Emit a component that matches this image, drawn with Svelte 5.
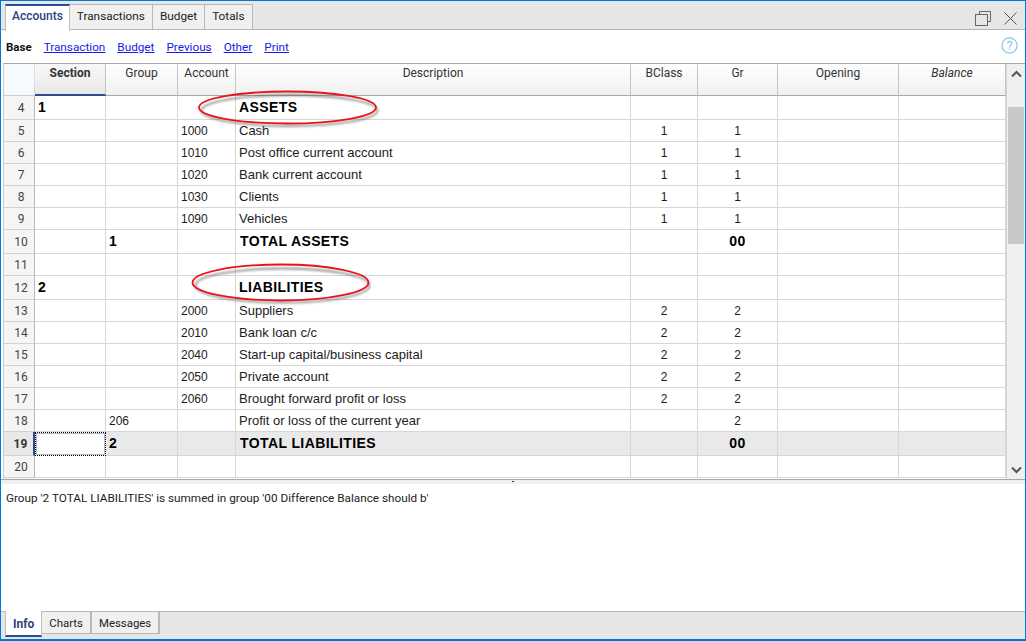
<script>
  const links = ['Transaction', 'Budget', 'Previous', 'Other', 'Print']
  const columns = [
    { label: '', cls: 'corner' },
    { label: 'Section', cls: 'active' },
    { label: 'Group' },
    { label: 'Account' },
    { label: 'Description' },
    { label: 'BClass' },
    { label: 'Gr' },
    { label: 'Opening' },
    { label: 'Balance', cls: 'italic' }
  ]

  // n, section, group, account, description, bclass, gr
  const rows = [
    { n: 4, section: '1', desc: 'ASSETS', kind: 'big head' },
    { n: 5, account: '1000', desc: 'Cash', bclass: '1', gr: '1' },
    { n: 6, account: '1010', desc: 'Post office current account', bclass: '1', gr: '1' },
    { n: 7, account: '1020', desc: 'Bank current account', bclass: '1', gr: '1' },
    { n: 8, account: '1030', desc: 'Clients', bclass: '1', gr: '1' },
    { n: 9, account: '1090', desc: 'Vehicles', bclass: '1', gr: '1' },
    { n: 10, group: '1', desc: 'TOTAL ASSETS', gr: '00', kind: 'big total' },
    { n: 11 },
    { n: 12, section: '2', desc: 'LIABILITIES', kind: 'big head' },
    { n: 13, account: '2000', desc: 'Suppliers', bclass: '2', gr: '2' },
    { n: 14, account: '2010', desc: 'Bank loan c/c', bclass: '2', gr: '2' },
    { n: 15, account: '2040', desc: 'Start-up capital/business capital', bclass: '2', gr: '2' },
    { n: 16, account: '2050', desc: 'Private account', bclass: '2', gr: '2' },
    { n: 17, account: '2060', desc: 'Brought forward profit or loss', bclass: '2', gr: '2' },
    { n: 18, group: '206', desc: 'Profit or loss of the current year', gr: '2' },
    { n: 19, group: '2', desc: 'TOTAL LIABILITIES', gr: '00', kind: 'big total current' },
    { n: 20 }
  ]
</script>

<div class="window">
  <div class="tabbar">
    <div class="tabs">
      <div class="tab on">Accounts</div>
      <div class="tab">Transactions</div>
      <div class="tab">Budget</div>
      <div class="tab">Totals</div>
    </div>
    <div class="winbtns">
      <svg width="16" height="15" viewBox="0 0 16 15" fill="none" stroke="#666">
        <path d="M4.500 3.500V0.500H15.500V10.500H12.500" />
        <rect x="0.500" y="3.500" width="12" height="11" />
      </svg>
      <svg width="13" height="13" viewBox="0 0 13 13" fill="none" stroke="#555">
        <path d="M0.500 0.500L12.500 12.500M12.500 0.500L0.500 12.500" />
      </svg>
    </div>
  </div>

  <div class="linkbar">
    <b>Base</b>
    {#each links as link}
      <a href="#top">{link}</a>
    {/each}
    <svg class="help" width="17" height="17" viewBox="0 0 17 17">
      <circle cx="8.500" cy="8.500" r="7.600" fill="none" stroke="#8cc4ea" stroke-width="1.200" />
      <text x="8.500" y="13" text-anchor="middle">?</text>
    </svg>
  </div>

  <div class="gridwrap">
    <div class="grid">
      <div class="hrow">
        {#each columns as c}
          <div class="hcell {c.cls ?? ''}">{c.label}</div>
        {/each}
      </div>
      {#each rows as r}
        <div class="row {r.kind ?? ''}">
          <div class="num">{r.n}</div>
          <div class="cell sec">{r.section ?? ''}</div>
          <div class="cell grp">{r.group ?? ''}</div>
          <div class="cell">{r.account ?? ''}</div>
          <div class="cell dsc">{r.desc ?? ''}</div>
          <div class="cell mid">{r.bclass ?? ''}</div>
          <div class="cell mid">{r.gr ?? ''}</div>
          <div class="cell"></div>
          <div class="cell"></div>
        </div>
      {/each}
      <div class="stub"></div>

      <svg class="marks" width="1002" height="400" viewBox="0 0 1002 400" fill="none">
        <defs>
          <filter id="soft" x="-10%" y="-30%" width="120%" height="160%">
            <feGaussianBlur stdDeviation="1.200" />
          </filter>
        </defs>
        <ellipse cx="285.500" cy="46.500" rx="88" ry="15.500" stroke="#444" stroke-opacity="0.6" stroke-width="1.800" filter="url(#soft)" />
        <ellipse cx="283.500" cy="43.500" rx="88.500" ry="16" stroke="#e8141c" stroke-width="1.800" />
        <ellipse cx="278.500" cy="221.500" rx="87" ry="17" stroke="#444" stroke-opacity="0.6" stroke-width="1.800" filter="url(#soft)" />
        <ellipse cx="276.500" cy="218.500" rx="88" ry="18" stroke="#e8141c" stroke-width="1.800" />
      </svg>
    </div>
    <div class="scroll">
      <svg width="11" height="8" viewBox="0 0 11 8" fill="none" stroke="#555" stroke-width="2"><path d="M1 6.500L5.500 2L10 6.500" /></svg>
      <div class="thumb"></div>
      <svg class="down" width="11" height="8" viewBox="0 0 11 8" fill="none" stroke="#555" stroke-width="2"><path d="M1 1.500L5.500 6L10 1.500" /></svg>
    </div>
  </div>

  <div class="splitter"><span></span></div>

  <div class="info">Group '2 TOTAL LIABILITIES' is summed in group '00 Difference Balance should b'</div>

  <div class="bottomtabs">
    <div class="btab on">Info</div>
    <div class="btab">Charts</div>
    <div class="btab">Messages</div>
  </div>
</div>

<style>
  :global(body) {
    margin: 0;
    background: #fff;
  }

  .window {
    width: 1026px;
    height: 641px;
    box-sizing: border-box;
    border: 1px solid #0078d7;
    border-bottom-width: 2px;
    display: flex;
    flex-direction: column;
    font-family: 'Liberation Sans', Arial, sans-serif;
    font-size: 12px;
    color: #222;
    overflow: hidden;
    background: #fff;
  }

  .tabbar {
    height: 29px;
    flex: none;
    box-sizing: border-box;
    background: #e6e6e6;
    border-bottom: 1px solid #b4b4b4;
    display: flex;
    justify-content: space-between;
    padding-left: 4px;
    font-family: Roboto, sans-serif;
  }

  .tabs {
    display: flex;
    align-items: flex-end;
    margin-top: 3px;
    height: 26px;
  }

  .tab {
    height: 26px;
    box-sizing: border-box;
    background: #f0f0f0;
    border: 1px solid #b8b8b8;
    border-left: 0;
    padding: 4px 7px 0 7px;
    font-size: 11.800px;
    color: #222;
  }

  .tab.on {
    height: 27px;
    margin-bottom: -1px;
    background: #fff;
    border: 0;
    border-top: 2px solid #2f4b8f;
    border-left: 1px solid #c0c0c0;
    border-right: 1px solid #c0c0c0;
    color: #2f3f7f;
    font-size: 12px;
    font-weight: 500;
    padding: 3px 6px 0 6px;
  }

  .winbtns {
    display: flex;
    align-items: center;
    gap: 13px;
    padding: 0 8px 0 0;
    margin-top: 9px;
    height: 16px;
  }

  .linkbar {
    height: 33px;
    flex: none;
    box-sizing: border-box;
    display: flex;
    align-items: center;
    gap: 12px;
    padding: 0 5px 0 5px;
    font-family: Roboto, sans-serif;
    font-size: 11.750px;
  }

  .linkbar b {
    font-weight: 700;
    font-size: 11.500px;
    color: #111;
  }

  .linkbar a {
    color: #1a1ae6;
    text-decoration: underline;
  }

  .help {
    margin-left: auto;
    margin-right: 2px;
    margin-top: -2px;
  }

  .help text {
    font: 13px Roboto, sans-serif;
    fill: #8cc4ea;
  }

  .gridwrap {
    height: 416px;
    flex: none;
    margin-left: 2px;
    box-sizing: border-box;
    border-top: 1px solid #a8a8a8;
    border-left: 1px solid #ccc;
    display: flex;
    overflow: hidden;
  }

  .grid {
    width: 1002px;
    position: relative;
    flex: none;
    overflow: hidden;
  }

  .hrow,
  .row {
    display: grid;
    grid-template-columns: 31px 71px 72px 58px 395px 67px 80px 121px 107px;
  }

  .hrow {
    height: 32px;
  }

  .hcell {
    box-sizing: border-box;
    background: linear-gradient(#ffffff, #f0f0f0);
    border-right: 1px solid #c4c4c4;
    border-bottom: 1px solid #a8a8a8;
    text-align: center;
    padding-top: 2px;
    font-family: Roboto, sans-serif;
    font-size: 12px;
    color: #333;
  }

  .hcell.corner {
    background: #f5fafc;
    border-right: 1px solid #ddd;
    border-bottom-color: #ccc;
  }

  .hcell.active {
    font-weight: 700;
    background: linear-gradient(#f8f8f8, #e8e8e8);
    border-bottom: 2px solid #2f4b8f;
  }

  .hcell.italic {
    font-style: italic;
  }

  .row {
    height: 22px;
  }

  .row.big {
    height: 24px;
  }

  .num,
  .cell {
    box-sizing: border-box;
    border-right: 1px solid #d6d6d6;
    border-bottom: 1px solid #d6d6d6;
    line-height: 22px;
    white-space: nowrap;
    overflow: hidden;
  }

  .num {
    background: #f5f5f5;
    border-right-color: #b8b8b8;
    border-bottom-color: #d0d0d0;
    text-align: center;
    font-family: Roboto, sans-serif;
    font-size: 12px;
    color: #444;
    padding-left: 4px;
  }

  .row.big .num {
    line-height: 24px;
  }

  .cell {
    padding-left: 3px;
    color: #1c1c1c;
  }

  .cell.dsc {
    font-size: 13px;
    line-height: 21px;
  }

  .cell.mid {
    text-align: center;
    padding-left: 0;
  }

  .row.big .cell {
    font-size: 14px;
    font-weight: 700;
    line-height: 22px;
    letter-spacing: 0.4px;
    color: #000;
  }

  .row.total .dsc {
    padding-left: 4px;
  }

  .row.total .grp {
    padding-left: 3px;
  }

  .row.current .cell {
    background: #e9e9e9;
  }

  .row.current .sec {
    background: #fff;
    border: 1px dotted #000;
    box-shadow: inset 0 0 0 1px #1b2a6a55;
  }

  .row.current .num {
    font-weight: 700;
    background: #e8e8e8;
    color: #333;
    border-right: 2px solid #2f4b8f;
  }

  .stub {
    height: 2px;
    background: linear-gradient(90deg, #f5f5f5 31px, #fff 31px);
  }

  .marks {
    position: absolute;
    left: 0;
    top: 0;
    overflow: visible;
    pointer-events: none;
  }

  .scroll {
    flex: 1;
    background: #f0f0f0;
    border-left: 1px solid #d6d6d6;
    position: relative;
    display: flex;
    flex-direction: column;
    align-items: center;
  }

  .scroll svg {
    margin-top: 6px;
    flex: none;
  }

  .scroll .down {
    position: absolute;
    bottom: 5px;
    margin: 0;
  }

  .thumb {
    position: absolute;
    top: 43px;
    left: 1px;
    right: 1px;
    height: 137px;
    background: #c8c8c8;
  }

  .splitter {
    height: 4px;
    flex: none;
    background: #f0f0f0;
    border-top: 1px solid #a8a8a8;
    position: relative;
  }

  .splitter span {
    position: absolute;
    left: 511px;
    top: 1px;
    width: 2px;
    height: 1px;
    background: #333;
  }

  .info {
    flex: 1;
    padding: 7px 5px;
    font-family: Roboto, sans-serif;
    font-size: 11.750px;
    color: #222;
  }

  .bottomtabs {
    height: 28px;
    flex: none;
    box-sizing: border-box;
    background: #e6e6e6;
    border-top: 1px solid #b8b8b8;
    display: flex;
    padding-left: 4px;
    font-family: Roboto, sans-serif;
    font-size: 11.400px;
  }

  .btab {
    height: 22px;
    box-sizing: border-box;
    background: #f0f0f0;
    border-right: 2px solid #b8b8b8;
    border-bottom: 1px solid #b8b8b8;
    padding: 4px 7px 0 7px;
    color: #222;
  }

  .btab.on {
    height: 26px;
    background: #fff;
    border-left: 1px solid #c0c0c0;
    border-right: 1px solid #c0c0c0;
    border-bottom: 2px solid #2f4b8f;
    margin-top: -1px;
    padding-top: 6px;
    font-size: 12px;
    color: #2f3f7f;
    font-weight: 700;
  }
</style>
